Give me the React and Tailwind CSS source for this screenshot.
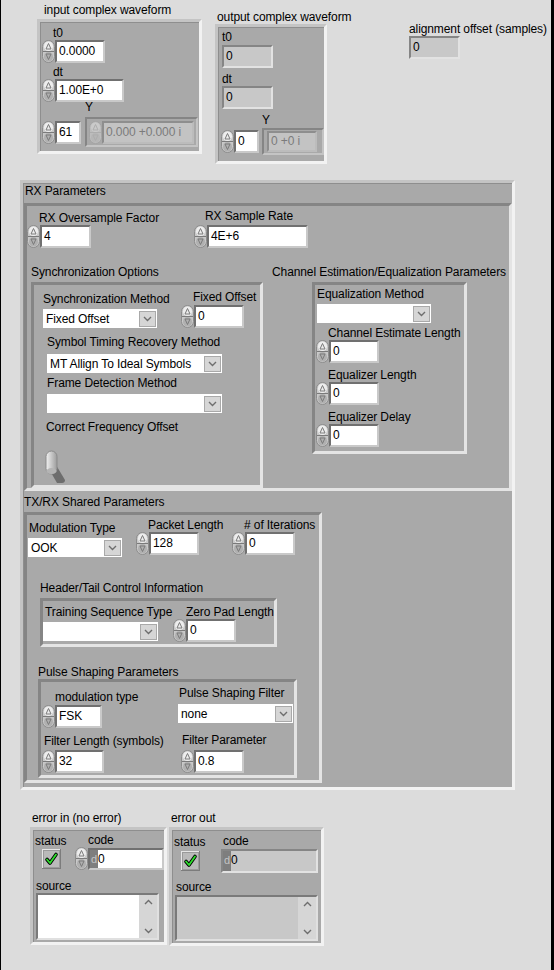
import React from "react";

const txt = "text-[12px] leading-[14px] tracking-[-0.1px] whitespace-nowrap";

function Label({ children, className = "" }) {
  return <div className={`${txt} text-black ${className}`}>{children}</div>;
}

function Spinner({ dim = false }) {
  const s = dim ? "#adadad" : "#7a7a7a";
  return (
    <svg width="13" height="23" viewBox="0 0 13 23" className="block shrink-0">
      <rect x="0.5" y="0.5" width="12" height="22" rx="6" fill={dim ? "#bdbdbd" : "#c9c9c9"} stroke={dim ? "#a4a4a4" : "#8c8c8c"} />
      <rect x="2" y="1.5" width="9" height="9.5" rx="4.5" fill={dim ? "#cacaca" : "#ededed"} />
      <rect x="2" y="12" width="9" height="9.5" rx="4.5" fill={dim ? "#b6b6b6" : "#b0b0b0"} />
      <line x1="1" y1="11.5" x2="12" y2="11.5" stroke={s} />
      <path d="M6.5 3.5 L9 9 L4 9 Z" fill="none" stroke={s} />
      <path d="M6.5 19.5 L9 14 L4 14 Z" fill="none" stroke={s} />
    </svg>
  );
}

function Field({ value, className = "", kind = "ctl" }) {
  const look =
    kind === "ctl"
      ? "bg-white text-black border-t-[#707070] border-l-[#707070] border-r-[#c9c9c9] border-b-[#c9c9c9]"
      : kind === "ind"
      ? "bg-[#c8c8c8] text-black border-t-[#858585] border-l-[#858585] border-r-[#e2e2e2] border-b-[#e2e2e2]"
      : "bg-[#c3c3c3] text-[#7b7b7b] border-t-[#8e8e8e] border-l-[#8e8e8e] border-r-[#bcbcbc] border-b-[#bcbcbc]";
  return (
    <div className={`h-[23px] border-2 pl-[2px] ${txt} leading-[19px] ${look} ${className}`}>{value}</div>
  );
}

function Num({ value, w, className = "" }) {
  return (
    <div className={`flex items-center ${className}`}>
      <Spinner />
      <Field value={value} className={w} />
    </div>
  );
}

function Chevron({ up = false }) {
  return (
    <svg width="9" height="6" viewBox="0 0 9 6" className="block">
      <path d={up ? "M1 5 L4.5 1.5 L8 5" : "M1 1 L4.5 4.5 L8 1"} stroke="#6e6e6e" strokeWidth="1.4" fill="none" />
    </svg>
  );
}

function Ring({ value = "", className = "" }) {
  return (
    <div className={`h-[19px] bg-white flex items-center justify-between pl-[3px] pr-[1px] ${className}`}>
      <span className={`${txt} text-black`}>{value}</span>
      <div className="w-[17px] h-[16px] bg-[#d6d6d6] border border-[#a9a9a9] flex items-center justify-center">
        <Chevron />
      </div>
    </div>
  );
}

function Cluster({ children, className = "", inner = false }) {
  const look = inner
    ? "border-t-[#858585] border-l-[#858585] border-r-[#e4e4e4] border-b-[#e4e4e4]"
    : "border-t-[#c4c4c4] border-l-[#c4c4c4] border-r-[#f2f2f2] border-b-[#f2f2f2] shadow-[inset_1px_1px_0_#8e8e8e]";
  return <div className={`border-[3px] bg-[#a9a9a9] ${look} ${className}`}>{children}</div>;
}

function Check({ className = "" }) {
  return (
    <svg width="19" height="20" viewBox="0 0 19 20" className={`block ${className}`}>
      <rect x="0" y="0" width="19" height="20" fill="#7c7c7c" />
      <rect x="0" y="0" width="18" height="19" fill="#e6e6e6" />
      <rect x="1" y="1" width="17" height="18" fill="#9a9a9a" />
      <rect x="2" y="2" width="15" height="16" fill="#bababa" />
      <path d="M5 10.5 L8 14 L14 5.5" stroke="#000" strokeWidth="3.6" fill="none" strokeLinecap="round" strokeLinejoin="round" />
      <path d="M5 10.5 L8 14 L14 5.5" stroke="#2ee02e" strokeWidth="1.8" fill="none" strokeLinecap="round" strokeLinejoin="round" />
    </svg>
  );
}

function Toggle({ className = "" }) {
  return (
    <svg width="22" height="34" viewBox="0 0 22 34" className={`block ${className}`}>
      <defs>
        <linearGradient id="knob" x1="0" y1="0" x2="1" y2="0">
          <stop offset="0" stopColor="#f2f2f2" />
          <stop offset="1" stopColor="#9c9c9c" />
        </linearGradient>
      </defs>
      <path d="M4 19 L11 15 L20 30 Q20 33 17 33 L12 33 Z" fill="#6d6d6d" />
      <rect x="1" y="1" width="11" height="23" rx="5.5" fill="url(#knob)" stroke="#8a8a8a" />
      <ellipse cx="6.5" cy="21" rx="5" ry="3" fill="#b4b4b4" />
    </svg>
  );
}

function CodeField({ ind = false, className = "" }) {
  return (
    <div className={`flex border-2 ${ind ? "border-t-[#858585] border-l-[#858585] border-r-[#e2e2e2] border-b-[#e2e2e2]" : "border-t-[#707070] border-l-[#707070] border-r-[#c9c9c9] border-b-[#c9c9c9]"} ${className}`}>
      <div className="w-[8px] bg-[#7e7e7e] text-[#c4c4c4] text-[11px] leading-[18px] pl-[1px]">d</div>
      <div className={`flex-1 ${ind ? "bg-[#c8c8c8]" : "bg-white"} ${txt} leading-[18px] text-black`}>0</div>
    </div>
  );
}

function TextBox({ ind = false, className = "" }) {
  return (
    <div className={`flex border-2 border-t-[#7a7a7a] border-l-[#7a7a7a] border-r-[#e0e0e0] border-b-[#e0e0e0] ${className}`}>
      <div className={`flex-1 ${ind ? "bg-[#c8c8c8]" : "bg-white"}`} />
      <div className="w-[18px] bg-[#d6d6d6] flex flex-col justify-between items-center py-[4px]">
        <Chevron up />
        <Chevron />
      </div>
    </div>
  );
}

export default function App() {
  return (
    <div className="w-[554px] h-[970px] bg-[#dcdcdc] border-l border-r-[3px] border-black font-['Liberation_Sans',Arial,sans-serif] overflow-hidden">
      {/* waveforms */}
      <div className="flex items-start h-[164px]">
        <div className="ml-[36px] mt-[3px] w-[165px]">
          <Label className="pl-[7px]">input complex waveform</Label>
          <Cluster className="mt-[2px] w-[165px] h-[135px]">
            <Label className="mt-[4px] ml-[13px]">t0</Label>
            <Num className="ml-[2px]" value="0.0000" w="w-[50px]" />
            <Label className="mt-[2px] ml-[13px]">dt</Label>
            <Num className="ml-[2px]" value="1.00E+0" w="w-[69px]" />
            <Label className="-mt-[2px] ml-[45px]">Y</Label>
            <div className="flex items-center mt-[3px] ml-[2px]">
              <Spinner />
              <Field value="61" className="w-[26px]" />
              <div className="ml-[4px] w-[113px] h-[30px] border-2 border-t-[#858585] border-l-[#858585] border-r-[#c4c4c4] border-b-[#c4c4c4] flex items-center pl-[2px]">
                <Spinner dim />
                <Field kind="dim" value="0.000 +0.000 i" className="w-[92px]" />
              </div>
            </div>
          </Cluster>
        </div>

        <div className="ml-[13px] mt-[10px] w-[112px]">
          <Label className="pl-[2px]">output complex waveform</Label>
          <Cluster className="w-[112px] h-[140px]">
            <Label className="mt-[3px] ml-[4px]">t0</Label>
            <Field kind="ind" value="0" className="mt-[1px] ml-[4px] w-[51px]" />
            <Label className="mt-[4px] ml-[4px]">dt</Label>
            <Field kind="ind" value="0" className="ml-[4px] w-[51px]" />
            <Label className="mt-[4px] ml-[44px]">Y</Label>
            <div className="flex items-center mt-[1px] ml-[3px]">
              <Spinner />
              <Field value="0" className="w-[25px]" />
              <div className="ml-[3px] w-[62px] h-[27px] border-2 border-t-[#858585] border-l-[#858585] border-r-[#c4c4c4] border-b-[#c4c4c4] flex items-center pl-[3px]">
                <Field kind="dim" value="0 +0 i" className="w-[50px] !h-[21px] !leading-[17px]" />
              </div>
            </div>
          </Cluster>
        </div>

        <div className="ml-[82px] mt-[22px]">
          <Label>alignment offset (samples)</Label>
          <Field kind="ind" value="0" className="w-[51px]" />
        </div>
      </div>

      {/* RX / TX parameters */}
      <Cluster className="mt-[16px] ml-[19px] w-[495px] h-[610px]">
        <Label className="mt-[1px] pl-[2px]">RX Parameters</Label>
        <Cluster inner className="mt-[5px] ml-[1px] w-[488px] h-[288px]">
          <div className="flex items-start">
            <div className="w-[64px] mt-[5px]">
              <Label className="pl-[12px]">RX Oversample Factor</Label>
              <Num value="4" w="w-[51px]" />
            </div>
            <div className="ml-[103px] mt-[3px]">
              <Label className="pl-[11px]">RX Sample Rate</Label>
              <Num className="mt-[2px]" value="4E+6" w="w-[101px]" />
            </div>
          </div>

          <div className="flex items-start mt-[17px]">
            <div className="ml-[4px] w-[232px]">
              <Label>Synchronization Options</Label>
              <Cluster inner className="mt-[3px] w-[232px] h-[206px]">
                <div className="flex items-start">
                  <div className="w-[147px] pl-[9px]">
                    <Label className="mt-[7px]">Synchronization Method</Label>
                    <Ring className="mt-[3px] w-[114px]" value="Fixed Offset" />
                  </div>
                  <div className="mt-[5px]">
                    <Label className="pl-[12px]">Fixed Offset</Label>
                    <Num className="mt-[1px]" value="0" w="w-[50px]" />
                  </div>
                </div>
                <Label className="mt-[7px] ml-[13px]">Symbol Timing Recovery Method</Label>
                <Ring className="mt-[5px] ml-[13px] w-[175px]" value="MT Allign To Ideal Symbols" />
                <Label className="mt-[3px] ml-[13px]">Frame Detection Method</Label>
                <Ring className="mt-[4px] ml-[13px] w-[175px]" />
                <Label className="mt-[7px] ml-[12px]">Correct Frequency Offset</Label>
                <Toggle className="mt-[16px] ml-[11px]" />
              </Cluster>
            </div>
            <div className="ml-[9px]">
              <Label>Channel Estimation/Equalization Parameters</Label>
              <Cluster inner className="mt-[3px] ml-[40px] w-[155px] h-[172px]">
                <Label className="mt-[2px] ml-[2px]">Equalization Method</Label>
                <Ring className="mt-[3px] ml-[2px] w-[114px]" />
                <Label className="mt-[3px] ml-[13px]">Channel Estimate Length</Label>
                <Num className="ml-[1px]" value="0" w="w-[50px]" />
                <Label className="mt-[5px] ml-[13px]">Equalizer Length</Label>
                <Num className="ml-[1px]" value="0" w="w-[50px]" />
                <Label className="mt-[5px] ml-[13px]">Equalizer Delay</Label>
                <Num className="ml-[1px]" value="0" w="w-[50px]" />
              </Cluster>
            </div>
          </div>
        </Cluster>

        <Label className="mt-[4px] ml-[1px]">TX/RX Shared Parameters</Label>
        <Cluster inner className="mt-[3px] ml-[1px] w-[298px] h-[271px]">
          <div className="flex items-start">
            <div className="w-[108px] ml-[1px]">
              <Label className="mt-[6px] pl-[1px]">Modulation Type</Label>
              <Ring className="mt-[3px] w-[94px]" value="OOK" />
            </div>
            <div className="w-[96px] mt-[3px]">
              <Label className="pl-[12px]">Packet Length</Label>
              <Num value="128" w="w-[50px]" />
            </div>
            <div className="mt-[3px]">
              <Label className="pl-[12px]"># of Iterations</Label>
              <Num value="0" w="w-[50px]" />
            </div>
          </div>

          <Label className="mt-[24px] ml-[13px]">Header/Tail Control Information</Label>
          <Cluster inner className="mt-[3px] ml-[13px] w-[237px] h-[49px]">
            <div className="flex items-start">
              <div className="w-[130px]">
                <Label className="mt-[4px] pl-[2px]">Training Sequence Type</Label>
                <Ring className="mt-[3px] w-[115px]" />
              </div>
              <div className="mt-[4px]">
                <Label className="pl-[13px]">Zero Pad Length</Label>
                <Num value="0" w="w-[50px]" />
              </div>
            </div>
          </Cluster>

          <Label className="mt-[18px] ml-[11px]">Pulse Shaping Parameters</Label>
          <Cluster inner className="ml-[11px] w-[259px] h-[99px]">
            <div className="flex items-start">
              <div className="w-[137px]">
                <Label className="mt-[8px] pl-[14px]">modulation type</Label>
                <Num className="mt-[1px] ml-[1px]" value="FSK" w="w-[47px]" />
              </div>
              <div className="mt-[4px]">
                <Label className="pl-[1px]">Pulse Shaping Filter</Label>
                <Ring className="mt-[4px] w-[115px]" value="none" />
              </div>
            </div>
            <div className="flex items-start">
              <div className="w-[137px]">
                <Label className="mt-[6px] pl-[3px]">Filter Length (symbols)</Label>
                <Num className="mt-[2px] ml-[1px]" value="32" w="w-[49px]" />
              </div>
              <div className="mt-[5px]">
                <Label className="pl-[4px]">Filter Parameter</Label>
                <Num className="mt-[3px] ml-[3px]" value="0.8" w="w-[50px]" />
              </div>
            </div>
          </Cluster>
        </Cluster>
      </Cluster>

      {/* error clusters */}
      <div className="flex items-start ml-[29px]">
        <div className="w-[139px] mt-[21px]">
          <Label className="pl-[2px]">error in (no error)</Label>
          <Cluster className="mt-[2px] w-[137px] h-[118px]">
            <div className="flex items-start">
              <div className="w-[42px]">
                <Label className="mt-[4px] pl-[2px]">status</Label>
                <Check className="mt-[1px] ml-[9px]" />
              </div>
              <div className="mt-[3px]">
                <Label className="pl-[13px]">code</Label>
                <div className="flex items-center">
                  <Spinner />
                  <CodeField className="w-[76px] h-[22px]" />
                </div>
              </div>
            </div>
            <Label className="mt-[9px] pl-[3px]">source</Label>
            <TextBox className="ml-[3px] w-[123px] h-[47px]" />
          </Cluster>
        </div>

        <div className="mt-[21px]">
          <Label className="pl-[2px]">error out</Label>
          <Cluster className="mt-[2px] w-[155px] h-[119px]">
            <div className="flex items-start">
              <div className="w-[49px]">
                <Label className="mt-[5px] pl-[2px]">status</Label>
                <Check className="mt-[2px] ml-[9px]" />
              </div>
              <div className="mt-[4px]">
                <Label className="pl-[2px]">code</Label>
                <CodeField ind className="mt-[1px] w-[97px] h-[24px]" />
              </div>
            </div>
            <Label className="mt-[7px] pl-[4px]">source</Label>
            <TextBox ind className="mt-[1px] ml-[3px] w-[143px] h-[46px]" />
          </Cluster>
        </div>
      </div>
    </div>
  );
}
